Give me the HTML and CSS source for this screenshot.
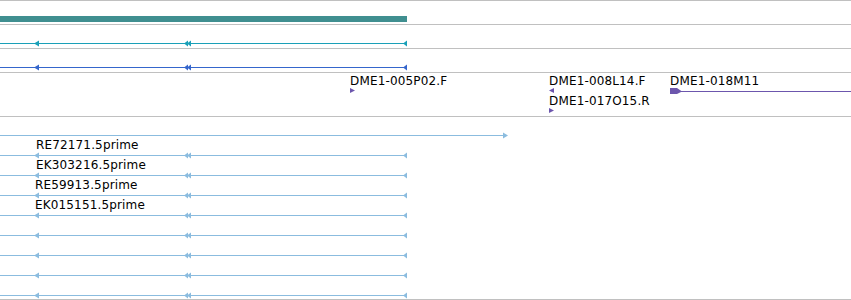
FILE: index.html
```html
<!DOCTYPE html>
<html lang="en">
<head>
    <meta charset="UTF-8">
    <title>Tracks</title>
    <link rel="stylesheet" href="styles.css">
</head>
<body>
    <div class="tracks">
        <!-- gene span -->
        <div class="track track-gene">
            <svg width="851" height="23">
                <rect class="gene-bar" x="0" y="15" width="407" height="6"/>
            </svg>
        </div>

        <!-- transcript 1 -->
        <div class="track track-small">
            <svg width="851" height="23" class="tx-a">
                <rect x="0" y="18" width="407" height="1"/>
                <polygon points="34,18.5 39,15.5 39,21.5"/>
                <polygon points="184,18.5 188,15.5 188,21.5"/>
                <polygon points="187,18.5 191,15.5 191,21.5"/>
                <polygon points="403,18.5 407,15.5 407,21.5"/>
            </svg>
        </div>

        <!-- transcript 2 -->
        <div class="track track-small">
            <svg width="851" height="23" class="tx-b">
                <rect x="0" y="18" width="407" height="1"/>
                <polygon points="34,18.5 39,15.5 39,21.5"/>
                <polygon points="184,18.5 188,15.5 188,21.5"/>
                <polygon points="187,18.5 191,15.5 191,21.5"/>
                <polygon points="403,18.5 407,15.5 407,21.5"/>
            </svg>
        </div>

        <!-- BAC ends -->
        <div class="track track-bac">
            <svg width="851" height="43" class="bac">
                <text x="350" y="12">DME1-005P02.F</text>
                <polygon points="350,15 355,17.5 350,20"/>
                <text x="549" y="12">DME1-008L14.F</text>
                <polygon points="549,17.5 554,15 554,20"/>
                <text x="549" y="32">DME1-017O15.R</text>
                <polygon points="549,35 554,37.5 549,40"/>
                <text x="670" y="12">DME1-018M11</text>
                <rect x="670" y="18" width="181" height="1"/>
                <polygon points="670,15 677,15 682,18.5 677,21 670,21"/>
            </svg>
        </div>

        <!-- ESTs -->
        <div class="track track-est">
            <svg width="851" height="182" class="est">
                <rect x="0" y="18" width="504" height="1"/>
                <polygon points="503,15.5 508,18.5 503,21.5"/>

                <g class="row" transform="translate(0,20)">
                    <rect x="0" y="18" width="407" height="1"/>
                    <polygon points="34,18.5 39,15.5 39,21.5"/>
                    <polygon points="184,18.5 188,15.5 188,21.5"/>
                    <polygon points="187,18.5 191,15.5 191,21.5"/>
                    <polygon points="403,18.5 407,15.5 407,21.5"/>
                </g>
                <g class="row" transform="translate(0,40)">
                    <rect x="0" y="18" width="407" height="1"/>
                    <polygon points="34,18.5 39,15.5 39,21.5"/>
                    <polygon points="184,18.5 188,15.5 188,21.5"/>
                    <polygon points="187,18.5 191,15.5 191,21.5"/>
                    <polygon points="403,18.5 407,15.5 407,21.5"/>
                </g>
                <g class="row" transform="translate(0,60)">
                    <rect x="0" y="18" width="407" height="1"/>
                    <polygon points="34,18.5 39,15.5 39,21.5"/>
                    <polygon points="184,18.5 188,15.5 188,21.5"/>
                    <polygon points="187,18.5 191,15.5 191,21.5"/>
                    <polygon points="403,18.5 407,15.5 407,21.5"/>
                </g>
                <g class="row" transform="translate(0,80)">
                    <rect x="0" y="18" width="407" height="1"/>
                    <polygon points="34,18.5 39,15.5 39,21.5"/>
                    <polygon points="184,18.5 188,15.5 188,21.5"/>
                    <polygon points="187,18.5 191,15.5 191,21.5"/>
                    <polygon points="403,18.5 407,15.5 407,21.5"/>
                </g>
                <g class="row" transform="translate(0,100)">
                    <rect x="0" y="18" width="407" height="1"/>
                    <polygon points="34,18.5 39,15.5 39,21.5"/>
                    <polygon points="184,18.5 188,15.5 188,21.5"/>
                    <polygon points="187,18.5 191,15.5 191,21.5"/>
                    <polygon points="403,18.5 407,15.5 407,21.5"/>
                </g>
                <g class="row" transform="translate(0,120)">
                    <rect x="0" y="18" width="407" height="1"/>
                    <polygon points="34,18.5 39,15.5 39,21.5"/>
                    <polygon points="184,18.5 188,15.5 188,21.5"/>
                    <polygon points="187,18.5 191,15.5 191,21.5"/>
                    <polygon points="403,18.5 407,15.5 407,21.5"/>
                </g>
                <g class="row" transform="translate(0,140)">
                    <rect x="0" y="18" width="407" height="1"/>
                    <polygon points="34,18.5 39,15.5 39,21.5"/>
                    <polygon points="184,18.5 188,15.5 188,21.5"/>
                    <polygon points="187,18.5 191,15.5 191,21.5"/>
                    <polygon points="403,18.5 407,15.5 407,21.5"/>
                </g>
                <g class="row" transform="translate(0,160)">
                    <rect x="0" y="18" width="407" height="1"/>
                    <polygon points="34,18.5 39,15.5 39,21.5"/>
                    <polygon points="184,18.5 188,15.5 188,21.5"/>
                    <polygon points="187,18.5 191,15.5 191,21.5"/>
                    <polygon points="403,18.5 407,15.5 407,21.5"/>
                </g>

                <text x="36" y="32">RE72171.5prime</text>
                <text x="36" y="52">EK303216.5prime</text>
                <text x="35" y="72">RE59913.5prime</text>
                <text x="35" y="92">EK015151.5prime</text>
            </svg>
        </div>
    </div>
</body>
</html>
```

FILE: styles.css
```css
body {
    margin: 0;
    padding: 0;
    background-color: #ffffff;
    font-family: "DejaVu Sans", sans-serif;
    overflow: hidden;
}

.tracks {
    width: 851px;
}

.track {
    border-top: 1px solid #c0c0c0;
    line-height: 0;
}

.track svg {
    display: block;
}

.track-gene,
.track-small {
    height: 23px;
}

.track-bac {
    height: 43px;
}

.track-est {
    height: 182px;
    border-bottom: 1px solid #c0c0c0;
}

.gene-bar {
    fill: #408f90;
}

.tx-a {
    fill: #1aa0b8;
}

.tx-b {
    fill: #3566cc;
}

.bac {
    fill: #6c56ad;
}

.est {
    fill: #8bbcdf;
}

text {
    font-family: "DejaVu Sans", sans-serif;
    font-size: 12px;
    letter-spacing: 0.15px;
    fill: #000000;
}
```
